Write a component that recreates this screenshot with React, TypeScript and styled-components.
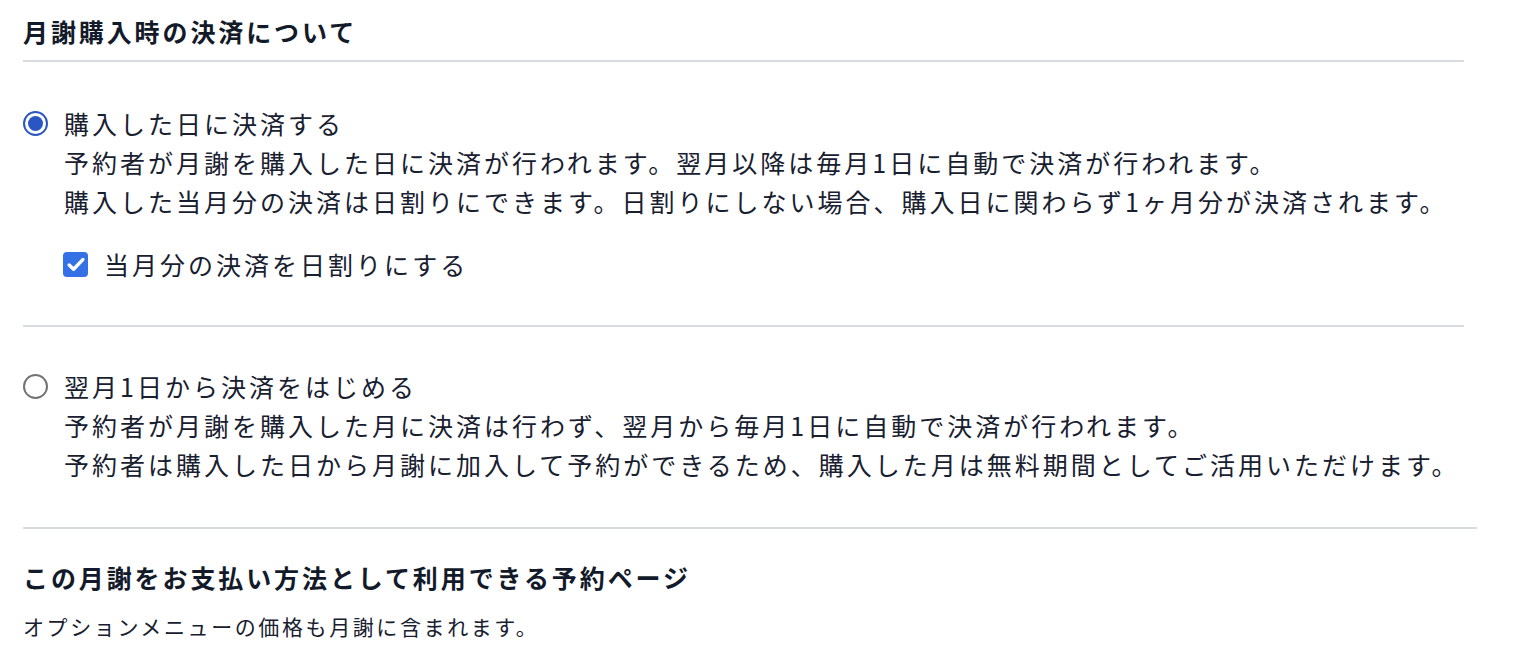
import React, { useState } from "react";
import styled, { createGlobalStyle } from "styled-components";

const GlobalStyle = createGlobalStyle`
  html, body {
    margin: 0;
    padding: 0;
    background: #ffffff;
  }
  body {
    font-family: "Noto Sans CJK JP", "Noto Sans", sans-serif;
    color: #182030;
  }
`;

const Page = styled.div`
  padding: 11px 0 0 23px;
  width: 1441px;
`;

const Title = styled.h2`
  margin: 0;
  font-size: 25px;
  font-weight: 700;
  line-height: 40px;
  letter-spacing: 2.9px;
  color: #131a29;
  padding-bottom: 9px;
`;

const Divider = styled.hr<{ $extra?: number }>`
  margin: 0;
  border: none;
  height: 2px;
  background: #d8dbe1;
  width: calc(100% + ${(p) => p.$extra ?? 0}px);
`;

const Section = styled.section<{ $top: number; $bottom: number }>`
  padding: ${(p) => p.$top}px 0 ${(p) => p.$bottom}px;
  display: flex;
  flex-direction: column;
`;

const OptionRow = styled.label`
  display: grid;
  grid-template-columns: 25px 1fr;
  column-gap: 16px;
  align-items: start;
  cursor: pointer;
`;

const RadioDot = styled.span<{ $checked: boolean }>`
  width: 25px;
  height: 25px;
  margin-top: 7px;
  box-sizing: border-box;
  border-radius: 50%;
  border: 2px solid ${(p) => (p.$checked ? "#2a56c4" : "#737373")};
  display: flex;
  align-items: center;
  justify-content: center;
  &::after {
    content: "";
    width: 15px;
    height: 15px;
    border-radius: 50%;
    background: ${(p) => (p.$checked ? "#2a56c4" : "transparent")};
  }
`;

const TextBlock = styled.div`
  display: flex;
  flex-direction: column;
  min-width: 0;
`;

const Label = styled.span`
  font-size: 25px;
  line-height: 39px;
  letter-spacing: 3px;
  white-space: nowrap;
  color: #182030;
`;

const Desc = styled.p`
  margin: 0;
  font-size: 25px;
  line-height: 39px;
  letter-spacing: 3px;
  white-space: nowrap;
  color: #182030;
`;

const CheckRow = styled.label`
  display: flex;
  align-items: center;
  gap: 16px;
  margin: 24px 0 0 40px;
  cursor: pointer;
`;

const CheckBox = styled.span<{ $checked: boolean }>`
  width: 25px;
  height: 25px;
  border-radius: 4px;
  box-sizing: border-box;
  background: ${(p) => (p.$checked ? "#3470e6" : "#ffffff")};
  border: ${(p) => (p.$checked ? "none" : "2px solid #737373")};
  display: flex;
  align-items: center;
  justify-content: center;
`;

const SubTitle = styled.h3`
  margin: 0;
  font-size: 25px;
  font-weight: 700;
  line-height: 40px;
  letter-spacing: 2.9px;
  color: #131a29;
`;

const Note = styled.p`
  margin: 14px 0 0;
  font-size: 21px;
  line-height: 30px;
  letter-spacing: 2.6px;
  color: #182030;
`;

export default function App() {
  const [mode, setMode] = useState<"day" | "next">("day");
  const [prorate, setProrate] = useState(true);

  return (
    <>
      <GlobalStyle />
      <Page>
        <Title>月謝購入時の決済について</Title>
        <Divider />
        <Section $top={42} $bottom={41}>
          <OptionRow onClick={() => setMode("day")}>
            <RadioDot $checked={mode === "day"} />
            <TextBlock>
              <Label>購入した日に決済する</Label>
              <Desc>予約者が月謝を購入した日に決済が行われます。翌月以降は毎月1日に自動で決済が行われます。</Desc>
              <Desc>購入した当月分の決済は日割りにできます。日割りにしない場合、購入日に関わらず1ヶ月分が決済されます。</Desc>
            </TextBlock>
          </OptionRow>
          <CheckRow onClick={() => setProrate(!prorate)}>
            <CheckBox $checked={prorate}>
              {prorate && (
                <svg width="18" height="15" viewBox="0 0 18 15" fill="none">
                  <path d="M2.2 8 L6.6 12.2 L15.8 2.6" stroke="#ffffff" strokeWidth="3.4" strokeLinecap="round" strokeLinejoin="round" />
                </svg>
              )}
            </CheckBox>
            <Label>当月分の決済を日割りにする</Label>
          </CheckRow>
        </Section>
        <Divider />
        <Section $top={40} $bottom={43}>
          <OptionRow onClick={() => setMode("next")}>
            <RadioDot $checked={mode === "next"} />
            <TextBlock>
              <Label>翌月1日から決済をはじめる</Label>
              <Desc>予約者が月謝を購入した月に決済は行わず、翌月から毎月1日に自動で決済が行われます。</Desc>
              <Desc>予約者は購入した日から月謝に加入して予約ができるため、購入した月は無料期間としてご活用いただけます。</Desc>
            </TextBlock>
          </OptionRow>
        </Section>
        <Divider $extra={13} />
        <Section $top={28} $bottom={0}>
          <SubTitle>この月謝をお支払い方法として利用できる予約ページ</SubTitle>
          <Note>オプションメニューの価格も月謝に含まれます。</Note>
        </Section>
      </Page>
    </>
  );
}
